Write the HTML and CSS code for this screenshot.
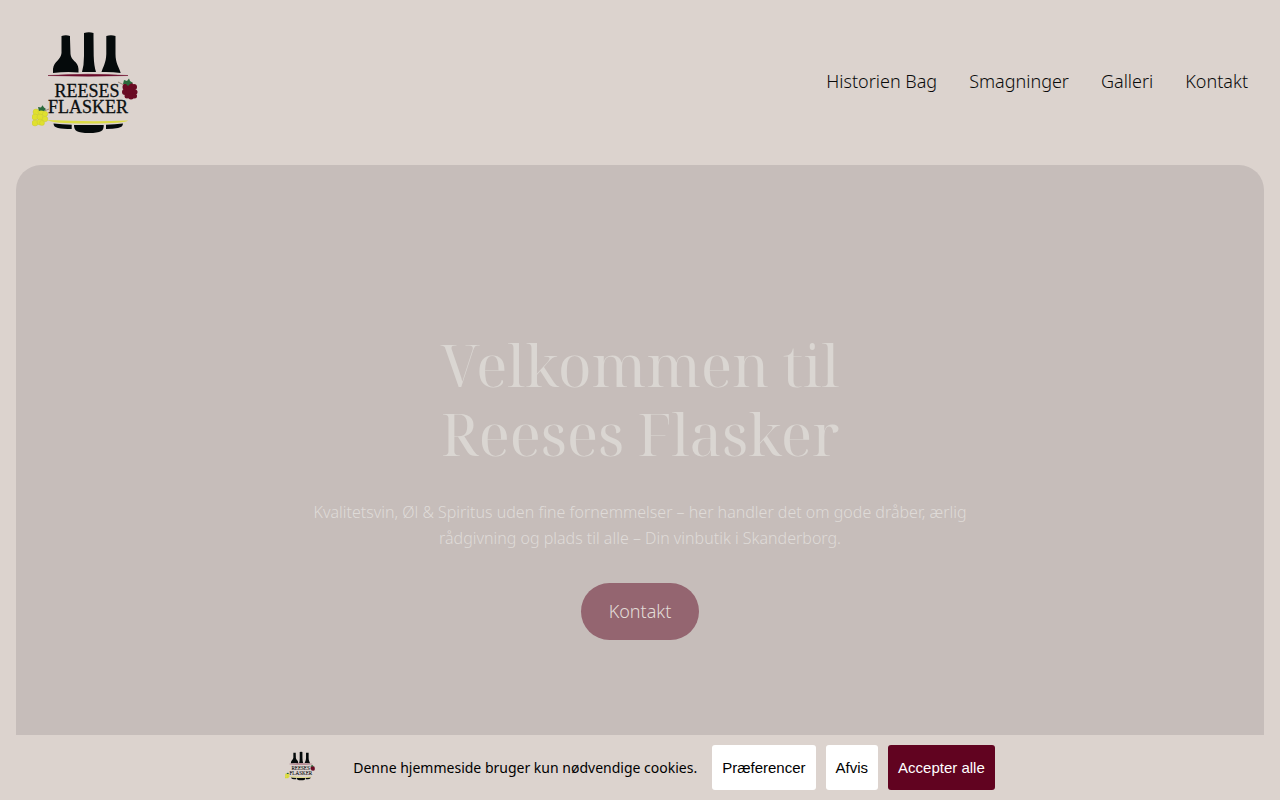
FILE: index.html
```html
<!DOCTYPE html>
<html lang="da">
<head>
<meta charset="utf-8">
<meta name="viewport" content="width=device-width, initial-scale=1">
<title>Reeses Flasker</title>
<link rel="stylesheet" href="styles.css">
</head>
<body>
<svg class="sprite" aria-hidden="true">
  <symbol id="logo" viewBox="0 0 106 101">
    <g fill="#050a0b">
      <path d="M29.500 4Q34 2.500 38 4V7L38.500 22C39 29 46 29 46.500 37V40.500Q34 39.500 21 41V37C22 29 29 28 29.500 21Z"/>
      <path d="M52 1Q57 -.5 61.500 1V5L61.700 24Q62 34 64 40H50Q52 33 52 24Z"/>
      <path d="M74.300 4Q79 2.500 83.500 4V22C83.500 31 87 35 88.700 41Q79 39.500 69.500 40C71 35 74 31 74.300 22Z"/>
      <path d="M21.500 91.500Q30 92.500 39.700 92.700V97Q31 97 26 96Q21.500 95 21.500 91.500Z"/>
      <path d="M42 93H71.700C72 99 69 101 57 101C45 101 42 99 42 93Z"/>
      <path d="M74 92.700Q83 92.500 91 91.500Q91 95 86 96Q81 97 74 97Z"/>
    </g>
    <path d="M16 43.500Q56 41 96 43.500Q56 45 16 43.500Z" fill="#6b0a2b" stroke="#6b0a2b" stroke-width=".5"/>
    <path d="M15 88Q56 90 96 88.500Q94 91.500 56 91.500Q20 91.500 15 88Z" fill="#dcdc45"/>
    <g class="logo-text" fill="#0b0f10" stroke="#0b0f10" stroke-width=".3" text-anchor="middle">
      <text x="55" y="65">REESES</text>
      <text x="56" y="81">FLASKER</text>
    </g>
    <path d="M86 50L94 54M10 80L17 77" stroke="#9b8a78" fill="none"/>
    <g fill="#6a0b24">
      <path d="M93 54L97 52L102 54L104 60L102 65L96 64L92 61Z"/>
      <circle cx="94" cy="55" r="3.500"/><circle cx="98" cy="53" r="3"/><circle cx="102" cy="55" r="3"/>
      <circle cx="93" cy="60" r="3"/><circle cx="98" cy="59" r="4"/><circle cx="103" cy="60" r="2.500"/>
      <circle cx="95" cy="64" r="2.500"/><circle cx="99" cy="64.500" r="3"/><circle cx="102.500" cy="64" r="2.500"/>
    </g>
    <path d="M92 48L95 49L97 46.500L98 49L101 51L98 52L96 54L94 52L91 52Z" fill="#2b6a3c"/>
    <g fill="#e0e02f" stroke="#c5c72d" stroke-width=".4">
      <circle cx="4" cy="80" r="3"/><circle cx="9" cy="80" r="3"/><circle cx="13" cy="82" r="2.700"/>
      <circle cx="3" cy="85" r="3"/><circle cx="8" cy="85" r="3"/><circle cx="13" cy="87" r="2.800"/>
      <circle cx="3" cy="91" r="3"/><circle cx="8" cy="90" r="3"/><circle cx="10" cy="91" r="2.500"/>
    </g>
    <path d="M6 75L9 75.500L10.500 73.300L12 75.500L14 77L12 79L9 78.500L7 79Z" fill="#2b6a3c"/>
  </symbol>
</svg>
<header class="site-header">
  <a href="#" aria-label="Reeses Flasker"><svg class="logo" aria-hidden="true"><use href="#logo"/></svg></a>
  <nav class="nav">
    <a href="#historien">Historien Bag</a>
    <a href="#smagninger">Smagninger</a>
    <a href="#galleri">Galleri</a>
    <a href="#kontakt">Kontakt</a>
  </nav>
</header>
<main class="hero">
  <h1>Velkommen til<br>Reeses Flasker</h1>
  <p>Kvalitetsvin, Øl &amp; Spiritus uden fine fornemmelser – her handler det om gode dråber, ærlig<br>rådgivning og plads til alle – Din vinbutik i Skanderborg.</p>
  <a class="cta" href="#kontakt">Kontakt</a>
</main>
<aside class="cookies" aria-label="Cookies">
  <svg class="cookie-logo" aria-hidden="true"><use href="#logo"/></svg>
  <span class="cookie-text">Denne hjemmeside bruger kun nødvendige cookies.</span>
  <div class="cookie-actions">
    <button type="button">Præferencer</button>
    <button type="button">Afvis</button>
    <button type="button" class="primary">Accepter alle</button>
  </div>
</aside>
</body>
</html>
```

FILE: styles.css
```css
* { box-sizing: border-box; }
body {
  margin: 0;
  min-height: 100vh;
  display: flex;
  flex-direction: column;
  background: #dcd3ce;
  color: #0b0b0b;
  font-family: "Noto Sans", sans-serif;
}
.sprite { position: absolute; width: 0; height: 0; }
.logo-text { font-family: "Liberation Serif", serif; font-size: 18px; }
.site-header {
  display: flex;
  justify-content: space-between;
  align-items: center;
  padding: 32px;
}
.logo { display: block; width: 106px; height: 101px; }
.nav { display: flex; gap: 32px; padding-bottom: 4px; font-size: 18px; font-weight: 300; line-height: 28px; }
.nav a { color: inherit; text-decoration: none; }
.hero {
  flex: 1;
  margin: 0 16px;
  padding: 165px 24px 95px;
  border-radius: 25px 25px 0 0;
  background: #c6bdba;
  color: #dad6d2;
  display: flex;
  flex-direction: column;
  align-items: center;
  text-align: center;
}
h1 {
  margin: 0 0 31px;
  font-family: "Noto Serif Display", "Liberation Serif", serif;
  font-size: 58px;
  font-weight: 400;
  line-height: 69px;
}
.hero p { margin: 0 0 32px; font-size: 16px; font-weight: 300; line-height: 26px; color: #dfdbd8; }
.cta {
  padding: 14px 28px;
  border-radius: 29px;
  background: #946570;
  color: #e2dcd8;
  font-size: 18px;
  font-weight: 300;
  line-height: 29px;
  text-decoration: none;
}
.cookies {
  display: flex;
  justify-content: center;
  align-items: center;
  padding: 10px;
  background: #dcd3ce;
}
.cookie-logo { width: 30px; height: 30px; margin: 0 38px 4px 0; }
.cookie-text { margin-right: 15px; font-size: 14px; line-height: 20px; color: #000; }
.cookie-actions { display: flex; gap: 10px; }
.cookie-actions button {
  padding: 14px 10px;
  border: 0;
  border-radius: 3px;
  background: #fff;
  color: #000;
  font: 15px/17px "Liberation Sans", Arial, sans-serif;
}
.cookie-actions .primary { background: #610320; color: #fff; }
```
